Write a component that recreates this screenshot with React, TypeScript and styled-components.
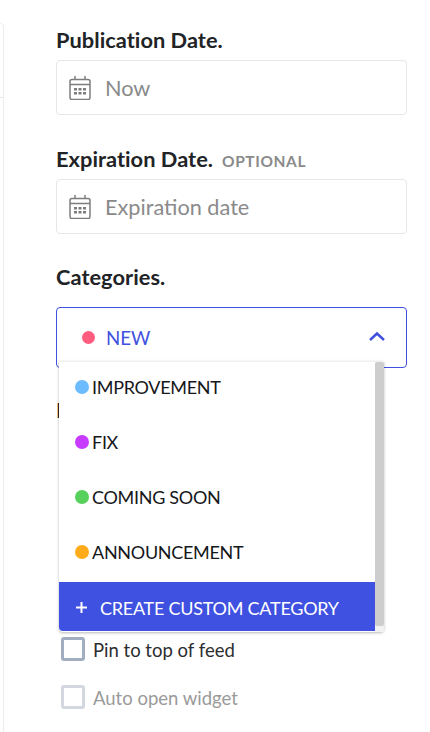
import React from "react";
import styled, { createGlobalStyle } from "styled-components";

const Global = createGlobalStyle`
  html, body { margin: 0; padding: 0; background: #fff; height: 100%; overflow: hidden; }
  * { box-sizing: border-box; }
  body { font-family: Lato, "Liberation Sans", sans-serif; }
`;

const Page = styled.div`
  display: flex;
  width: 430px;
  height: 732px;
  overflow: hidden;
`;

const SideEdge = styled.aside`
  width: 4px;
  height: 709px;
  margin-top: 23px;
  background: #fff;
  border-right: 1px solid #ececec;
  border-top: 1px solid #f0f0f0;
  border-top-right-radius: 4px;
  display: flex;
  flex-direction: column;
`;

const SideRule = styled.div`
  height: 1px;
  margin-top: 73px;
  background: #e6e6e6;
`;

const Form = styled.main`
  width: 351px;
  margin-left: 52px;
  padding-top: 27px;
  display: flex;
  flex-direction: column;
`;

const Field = styled.section<{ $gap: number }>`
  margin-bottom: ${(p) => p.$gap}px;
  position: relative;
`;

const LabelRow = styled.div<{ $gap?: number }>`
  display: flex;
  align-items: baseline;
  gap: 9px;
  height: 26px;
  margin-bottom: ${(p) => p.$gap ?? 7}px;
`;

const Label = styled.label`
  font-size: 21.8px;
  font-weight: 700;
  line-height: 26px;
  letter-spacing: 0.03px;
  color: #212326;
`;

const Optional = styled.span`
  font-size: 15.5px;
  font-weight: 700;
  letter-spacing: 0.6px;
  color: #8a8a8a;
`;

const DateBox = styled.div`
  height: 55px;
  border: 1px solid #e6e6e6;
  border-radius: 4px;
  display: flex;
  align-items: center;
  padding-left: 12px;
  gap: 14px;
  background: #fff;
`;

const Placeholder = styled.span`
  font-size: 21.7px;
  color: #8a8a8a;
`;

const Select = styled.div`
  height: 61px;
  border: 1px solid #3f51e0;
  border-radius: 4px;
  display: flex;
  align-items: center;
  padding: 0 21px 0 25px;
  color: #3f51e0;
  font-size: 18.7px;
`;

const Selected = styled.span`
  margin-left: 11px;
  flex: 1;
`;

const Dot = styled.span<{ $color: string; $size: number }>`
  width: ${(p) => p.$size}px;
  height: ${(p) => p.$size}px;
  border-radius: 50%;
  background: ${(p) => p.$color};
  flex: none;
`;

const ChevronWrap = styled.span`
  display: flex;
  margin-bottom: 4px;
`;

const Dropdown = styled.div`
  position: absolute;
  z-index: 2;
  left: 3px;
  top: 97px;
  width: 325px;
  height: 271px;
  background: #fff;
  display: flex;
  border-top: 1px solid #f0f0f0;
  border-radius: 0 0 4px 4px;
  box-shadow: 0 1px 3px rgba(0, 0, 0, 0.28);
`;

const List = styled.ul`
  list-style: none;
  margin: 0;
  padding: 0;
  flex: 1;
  display: flex;
  flex-direction: column;
`;

const Option = styled.li`
  height: 55px;
  flex: none;
  display: flex;
  align-items: center;
  gap: 3px;
  padding: 0 0 6px 16px;
  font-size: 18px;
  letter-spacing: -0.3px;
  color: #15171a;
`;

const CreateButton = styled.li`
  height: 50px;
  margin-top: auto;
  margin-bottom: 1px;
  padding: 2px 0 0 16px;
  background: #3f51e0;
  color: #fff;
  display: flex;
  align-items: center;
  gap: 12px;
  font-size: 18px;
  letter-spacing: -0.25px;
  border-bottom-left-radius: 4px;
`;

const Scrollbar = styled.div`
  width: 9px;
  background: #f1f1f1;
  display: flex;
  flex-direction: column;
`;

const Thumb = styled.div`
  height: 264px;
  background: #cdcdcd;
  border-radius: 2px;
`;

const CheckRow = styled.div<{ $muted?: boolean }>`
  display: flex;
  align-items: center;
  height: 26px;
  padding-left: 5px;
  gap: 8px;
  font-size: 18.5px;
  margin-bottom: 22px;
  color: ${(p) => (p.$muted ? "#9a9a9a" : "#2b2d30")};
`;

const CheckText = styled.span`
  padding-top: 2px;
`;

const Check = styled.span<{ $muted?: boolean }>`
  width: 24px;
  height: 24px;
  flex: none;
  border: 3px solid ${(p) => (p.$muted ? "#d3d7df" : "#a0aec0")};
  border-radius: 3px;
  background: #fff;
`;

const CalendarIcon = () => (
  <svg width="22" height="24" viewBox="0 0 22 24" fill="none" stroke="#7d7d7d" strokeWidth="1.5">
    <rect x="1" y="3.500" width="20" height="20" rx="2" />
    <path d="M1 8.500h20M6 0v4M16 0v4" />
    <path
      d="M5 12h3v2.500H5zM9.500 12h3v2.500h-3zM14 12h3v2.500h-3zM5 16h3v2.500H5zM9.500 16h3v2.500h-3zM14 16h3v2.500h-3z"
      fill="#7d7d7d"
      stroke="none"
    />
  </svg>
);

const Chevron = () => (
  <svg width="16" height="10" viewBox="0 0 16 10" fill="none" stroke="#3f51e0" strokeWidth="2.4">
    <path d="M1 9l7-6.500L15 9" />
  </svg>
);

const PlusIcon = () => (
  <svg width="13" height="13" viewBox="0 0 13 13" stroke="#fff" strokeWidth="2">
    <path d="M6.500 1v11M1 6.500h11" />
  </svg>
);

const options = [
  { name: "IMPROVEMENT", color: "#6cbcff" },
  { name: "FIX", color: "#c63bff" },
  { name: "COMING SOON", color: "#57d15b" },
  { name: "ANNOUNCEMENT", color: "#ffab1a" },
];

export default function App() {
  return (
    <Page>
      <Global />
      <SideEdge>
        <SideRule />
      </SideEdge>
      <Form>
        <Field $gap={31}>
          <LabelRow>
            <Label>Publication Date.</Label>
          </LabelRow>
          <DateBox>
            <CalendarIcon />
            <Placeholder>Now</Placeholder>
          </DateBox>
        </Field>
        <Field $gap={30}>
          <LabelRow>
            <Label>Expiration Date.</Label>
            <Optional>OPTIONAL</Optional>
          </LabelRow>
          <DateBox>
            <CalendarIcon />
            <Placeholder>Expiration date</Placeholder>
          </DateBox>
        </Field>
        <Field $gap={29}>
          <LabelRow $gap={17}>
            <Label>Categories.</Label>
          </LabelRow>
          <Select>
            <Dot $color="#ff5c80" $size={13} />
            <Selected>NEW</Selected>
            <ChevronWrap>
              <Chevron />
            </ChevronWrap>
          </Select>
          <Dropdown>
            <List>
              {options.map((o) => (
                <Option key={o.name}>
                  <Dot $color={o.color} $size={14} />
                  {o.name}
                </Option>
              ))}
              <CreateButton>
                <PlusIcon />
                CREATE CUSTOM CATEGORY
              </CreateButton>
            </List>
            <Scrollbar>
              <Thumb />
            </Scrollbar>
          </Dropdown>
        </Field>
        <Field $gap={206}>
          <LabelRow>
            <Label>Platforms.</Label>
          </LabelRow>
        </Field>
        <CheckRow>
          <Check />
          <CheckText>Pin to top of feed</CheckText>
        </CheckRow>
        <CheckRow $muted>
          <Check $muted />
          <CheckText>Auto open widget</CheckText>
        </CheckRow>
      </Form>
    </Page>
  );
}
